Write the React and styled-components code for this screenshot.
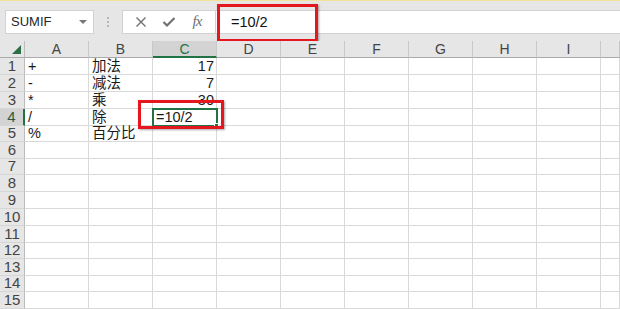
import React from 'react';
import styled, { createGlobalStyle } from 'styled-components';

const GlobalStyle = createGlobalStyle`
  html, body {
    margin: 0;
    padding: 0;
    background: #e6e6e6;
    overflow: hidden;
  }
  * { box-sizing: border-box; }
`;

const GREEN = '#217346';
const GRID = '#d9d9d9';

const Window = styled.div`
  width: 620px;
  height: 309px;
  display: flex;
  flex-direction: column;
  background: #e6e6e6;
  font-family: "Liberation Sans", "Noto Sans CJK SC", sans-serif;
  overflow: hidden;
`;

const TopStripe = styled.div`
  height: 1px;
  background: #f2e29a;
`;

const FormulaRow = styled.div`
  height: 42px;
  display: flex;
  align-items: flex-start;
  padding-top: 9px;
  padding-left: 5px;
`;

const NameBox = styled.div`
  width: 89px;
  height: 24px;
  background: #fff;
  border: 1px solid #d2d2d2;
  display: flex;
  align-items: center;
  justify-content: space-between;
  padding: 0 6px 0 5px;
  font-size: 13px;
  color: #262626;
`;

const Caret = styled.span`
  width: 0;
  height: 0;
  border-left: 4px solid transparent;
  border-right: 4px solid transparent;
  border-top: 4px solid #777;
`;

const Grip = styled.div`
  width: 28px;
  height: 24px;
  display: flex;
  flex-direction: column;
  align-items: center;
  justify-content: center;
  gap: 2px;
`;

const Dot = styled.span`
  width: 2px;
  height: 2px;
  background: #b5b5b5;
`;

const FormulaBox = styled.div`
  flex: 1;
  height: 24px;
  display: flex;
`;

const IconArea = styled.div`
  width: 94px;
  height: 24px;
  background: #fff;
  border: 1px solid #d2d2d2;
  display: flex;
  align-items: center;
  justify-content: space-around;
  padding: 0 4px;
`;

const IconButton = styled.span`
  width: 24px;
  display: flex;
  align-items: center;
  justify-content: center;
  color: #6e6e6e;
`;

const Fx = styled.span`
  font-family: "Liberation Serif", serif;
  font-style: italic;
  font-size: 15px;
  color: #6e6e6e;
  letter-spacing: -1px;
`;

const FormulaInput = styled.div`
  position: relative;
  flex: 1;
  height: 24px;
  background: #fff;
  border-top: 1px solid #d2d2d2;
  border-bottom: 1px solid #d2d2d2;
  display: flex;
  align-items: center;
  padding-left: 15px;
  font-size: 14.5px;
  color: #111;
`;

const RedMark = styled.div`
  position: absolute;
  border: 3px solid #e5161e;
  box-shadow: 1px 1px 2px rgba(0, 0, 0, 0.35);
  pointer-events: none;
`;

const Sheet = styled.div`
  position: relative;
  flex: 1;
  display: grid;
  grid-template-columns: 25px repeat(9, 64px) 1fr;
  background: #fff;
  font-size: 14.5px;
  color: #1a1a1a;
`;

const Corner = styled.div`
  background: #e6e6e6;
  border-right: 1px solid #bcbcbc;
  border-bottom: 1px solid #ababab;
  display: flex;
  align-items: flex-end;
  justify-content: flex-end;
  padding: 0 3px 3px 0;
`;

const ColHead = styled.div`
  background: ${p => (p.$active ? '#d3d3d3' : '#e6e6e6')};
  border-right: 1px solid #c8c8c8;
  border-bottom: ${p => (p.$active ? `2px solid ${GREEN}` : '1px solid #ababab')};
  color: ${p => (p.$active ? GREEN : '#444')};
  display: flex;
  align-items: center;
  justify-content: center;
  font-size: 14px;
`;

const RowHead = styled.div`
  background: ${p => (p.$active ? '#d3d3d3' : '#e6e6e6')};
  border-right: ${p => (p.$active ? `2px solid ${GREEN}` : '1px solid #bcbcbc')};
  border-bottom: 1px solid #d6d6d6;
  color: ${p => (p.$active ? '#2d5a3e' : '#444')};
  display: flex;
  align-items: flex-end;
  justify-content: center;
  font-size: 15px;
  line-height: 16px;
`;

const Cell = styled.div`
  position: relative;
  border-right: 1px solid ${GRID};
  border-bottom: 1px solid ${GRID};
  display: flex;
  align-items: flex-end;
  justify-content: ${p => (p.$right ? 'flex-end' : 'flex-start')};
  padding: 0 2px 0 3px;
  line-height: 15px;
  white-space: nowrap;
  ${p => p.$selected && `
    outline: 2px solid ${GREEN};
    outline-offset: -1px;
    z-index: 1;
  `}
`;

const Handle = styled.span`
  position: absolute;
  right: -3px;
  bottom: -3px;
  width: 5px;
  height: 5px;
  background: ${GREEN};
  border: 1px solid #fff;
`;

const columns = ['A', 'B', 'C', 'D', 'E', 'F', 'G', 'H', 'I', ''];
const rowHeights = [17, 17, 17, 17, 16, 17, 16, 17, 17, 17, 17, 16, 17, 16, 17];

const data = {
  1: { A: '+', B: '加法', C: '17' },
  2: { A: '-', B: '减法', C: '7' },
  3: { A: '*', B: '乘', C: '30' },
  4: { A: '/', B: '除', C: '=10/2' },
  5: { A: '%', B: '百分比' },
};

function CrossIcon() {
  return (
    <svg width="12" height="12" viewBox="0 0 12 12">
      <path d="M1.5 1.5 L10.5 10.5 M10.5 1.5 L1.5 10.5" stroke="#707070" strokeWidth="1.4" fill="none" />
    </svg>
  );
}

function CheckIcon() {
  return (
    <svg width="14" height="12" viewBox="0 0 14 12">
      <path d="M1.5 6 L5 9.5 L12.5 2" stroke="#707070" strokeWidth="2.2" fill="none" />
    </svg>
  );
}

function App() {
  return (
    <Window>
      <GlobalStyle />
      <TopStripe />
      <FormulaRow>
        <NameBox>
          <span>SUMIF</span>
          <Caret />
        </NameBox>
        <Grip>
          <Dot />
          <Dot />
          <Dot />
        </Grip>
        <FormulaBox>
          <IconArea>
            <IconButton><CrossIcon /></IconButton>
            <IconButton><CheckIcon /></IconButton>
            <IconButton><Fx>fx</Fx></IconButton>
          </IconArea>
          <FormulaInput>
            =10/2
            <RedMark style={{ left: 1, top: -7, width: 101, height: 38 }} />
          </FormulaInput>
        </FormulaBox>
      </FormulaRow>
      <Sheet style={{ gridTemplateRows: `17px ${rowHeights.map(h => h + 'px').join(' ')}` }}>
        <Corner>
          <svg width="9" height="9" viewBox="0 0 9 9">
            <path d="M9 0 L9 9 L0 9 Z" fill="#2c6e46" />
          </svg>
        </Corner>
        {columns.map((c, i) => (
          <ColHead key={'h' + i} $active={c === 'C'}>{c}</ColHead>
        ))}
        {rowHeights.map((_, r) => {
          const row = r + 1;
          return (
            <React.Fragment key={row}>
              <RowHead $active={row === 4}>{row}</RowHead>
              {columns.map((c, i) => {
                const value = data[row] && data[row][c];
                const selected = row === 4 && c === 'C';
                const numeric = value && /^\d+$/.test(value);
                return (
                  <Cell key={row + '-' + i} $right={numeric} $selected={selected}>
                    {value}
                    {selected && <Handle />}
                  </Cell>
                );
              })}
            </React.Fragment>
          );
        })}
        <RedMark style={{ left: 138, top: 59, width: 86, height: 29, zIndex: 2 }} />
      </Sheet>
    </Window>
  );
}

export default App;
